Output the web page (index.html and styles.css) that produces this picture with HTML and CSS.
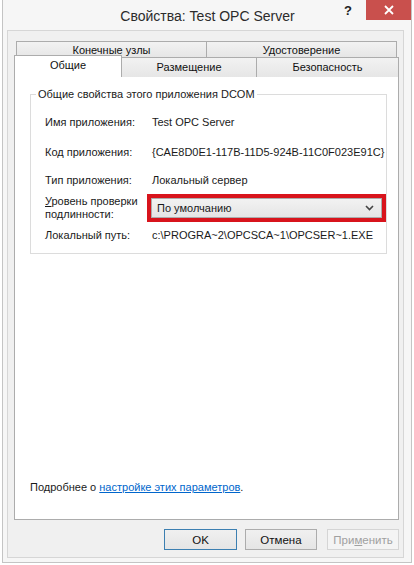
FILE: index.html
```html
<!DOCTYPE html>
<html lang="ru">
<head>
<meta charset="utf-8">
<title>Свойства: Test OPC Server</title>
<link rel="stylesheet" href="styles.css">
</head>
<body>
<div class="window">
  <div class="titlebar">
    <div class="title">Свойства: Test OPC Server</div>
    <div class="help">?</div>
    <div class="close">
      <svg width="10" height="10" viewBox="0 0 10 10"><path d="M1 1L9 9M9 1L1 9" stroke="#fff" stroke-width="1.8"/></svg>
    </div>
  </div>
  <div class="client">
    <div class="tabs">
      <div class="tabrow row1">
        <div class="tab t-nodes">Конечные узлы</div>
        <div class="tab t-ident">Удостоверение</div>
      </div>
      <div class="tabrow row2">
        <div class="tab t-general active">Общие</div>
        <div class="tab t-place">Размещение</div>
        <div class="tab t-sec">Безопасность</div>
      </div>
    </div>
    <div class="panel">
      <fieldset class="group">
        <legend>Общие свойства этого приложения DCOM</legend>
        <div class="prop r1"><span class="lbl">Имя приложения:</span><span class="val">Test OPC Server</span></div>
        <div class="prop r2"><span class="lbl">Код приложения:</span><span class="val">{CAE8D0E1-117B-11D5-924B-11C0F023E91C}</span></div>
        <div class="prop r3"><span class="lbl">Тип приложения:</span><span class="val">Локальный сервер</span></div>
        <div class="prop r4"><span class="lbl lbl2"><u>У</u>ровень проверки<br>подлинности:</span>
          <div class="highlight">
            <div class="combo"><span>По умолчанию</span>
              <svg width="9" height="6" viewBox="0 0 9 6"><path d="M1 1L4.5 4.5L8 1" fill="none" stroke="#444" stroke-width="1.6"/></svg>
            </div>
          </div>
        </div>
        <div class="prop r5"><span class="lbl">Локальный путь:</span><span class="val">c:\PROGRA~2\OPCSCA~1\OPCSER~1.EXE</span></div>
      </fieldset>
      <div class="footer">Подробнее о <a href="#">настройке этих параметров</a>.</div>
    </div>
    <div class="buttons">
      <button class="btn default">OK</button>
      <button class="btn cancel">Отмена</button>
      <button class="btn disabled">При<u>м</u>енить</button>
    </div>
  </div>
</div>
</body>
</html>
```
FILE: styles.css
```css
* { box-sizing: border-box; }
html, body { margin: 0; padding: 0; }
body {
  width: 414px;
  height: 565px;
  background: #ffffff;
  font-family: "Liberation Sans", Arial, sans-serif;
  font-size: 11px;
  color: #1a1a1a;
  overflow: hidden;
}
.window {
  margin-left: 2px;
  width: 410px;
  height: 563px;
  border: 1px solid #c4c4c4;
  border-top: none;
  background: #f6f6f6;
  padding: 0 7px 4px 4px;
  display: flex;
  flex-direction: column;
}
.titlebar {
  height: 30px;
  position: relative;
  flex: none;
}
.title {
  text-align: center;
  font-family: "Liberation Sans", Arial, sans-serif;
  font-size: 14px;
  line-height: 32px;
  color: #2b2b2b;
  padding-left: 4px;
}
.help {
  position: absolute;
  left: 337px;
  top: 3px;
  font-weight: bold;
  font-size: 13px;
  color: #222;
}
.close {
  position: absolute;
  left: 359px;
  top: 0;
  width: 45px;
  height: 20px;
  background: #c9504d;
  display: flex;
  align-items: center;
  justify-content: center;
}
.client {
  flex: 1;
  border: 1px solid #d6d6d6;
  background: #f0f0f0;
  padding: 10px 4px 7px 6px;
  display: flex;
  flex-direction: column;
}
.tabs { flex: none; }
.tabrow { display: flex; }
.row1 { margin-left: 2px; height: 16px; }
.row2 { height: 19px; position: relative; z-index: 1; }
.tab {
  border: 1px solid #acacac;
  border-bottom: none;
  background: linear-gradient(#f2f2f2, #e6e6e6);
  text-align: center;
  line-height: 16px;
  color: #111;
}
.tab + .tab { border-left: none; }
.t-nodes { width: 191px; }
.t-ident { width: 190px; }
.row2 .tab { line-height: 19px; height: 20px; }
.t-general { width: 108px; }
.t-place { width: 135px; }
.t-sec { width: 142px; }
.tab.active {
  background: #ffffff;
  height: 22px;
  margin-top: -2px;
  line-height: 19px;
  position: relative;
  z-index: 2;
}
.panel {
  flex: 1;
  width: 385px;
  background: #ffffff;
  border: 1px solid #acacac;
  display: flex;
  flex-direction: column;
  padding: 0 12px 0 15px;
}
.group {
  margin: 10px 0 0 0;
  border: 1px solid #dcdcdc;
  padding: 0 0 8px 14px;
}
.group legend {
  padding: 0 2px;
  margin-left: -9px;
  line-height: 15px;
}
.prop {
  display: flex;
  align-items: flex-start;
  line-height: 20px;
}
.lbl { width: 102px; flex: none; }
.val { padding-left: 5px; white-space: nowrap; }
.r1 { margin-top: 10px; height: 30px; }
.r2 { height: 28px; }
.r3 { height: 24px; }
.r4 { height: 31px; }
.r5 { height: 20px; }
.lbl2 { line-height: 13px; padding-top: 1px; }
.lbl2 u { text-decoration: underline; }
.highlight {
  width: 239px;
  height: 28px;
  border: 4px solid #d8141c;
}
.combo {
  height: 20px;
  border: 1px solid #acacac;
  background: linear-gradient(#f2f2f2, #e5e5e5);
  display: flex;
  align-items: center;
  justify-content: space-between;
  padding: 0 7px 0 5px;
  line-height: 18px;
}
.footer {
  margin-top: auto;
  padding-bottom: 24px;
  line-height: 16px;
}
.footer a { color: #0066cc; text-decoration: underline; }
.buttons {
  flex: none;
  display: flex;
  justify-content: flex-end;
  margin-top: 9px;
}
.btn {
  width: 72px;
  height: 21px;
  font-family: inherit;
  font-size: 11.5px;
  border: 1px solid #acacac;
  background: linear-gradient(#f0f0f0, #e5e5e5);
  color: #111;
  padding: 0;
  margin-left: 9px;
}
.btn.default { width: 73px; border-color: #3c7fb1; margin-left: 0; }
.btn.cancel { margin-left: 8px; }
.btn.disabled { margin-left: 10px; color: #a0a0a0; border-color: #d5d5d5; background: #f4f4f4; }
```
